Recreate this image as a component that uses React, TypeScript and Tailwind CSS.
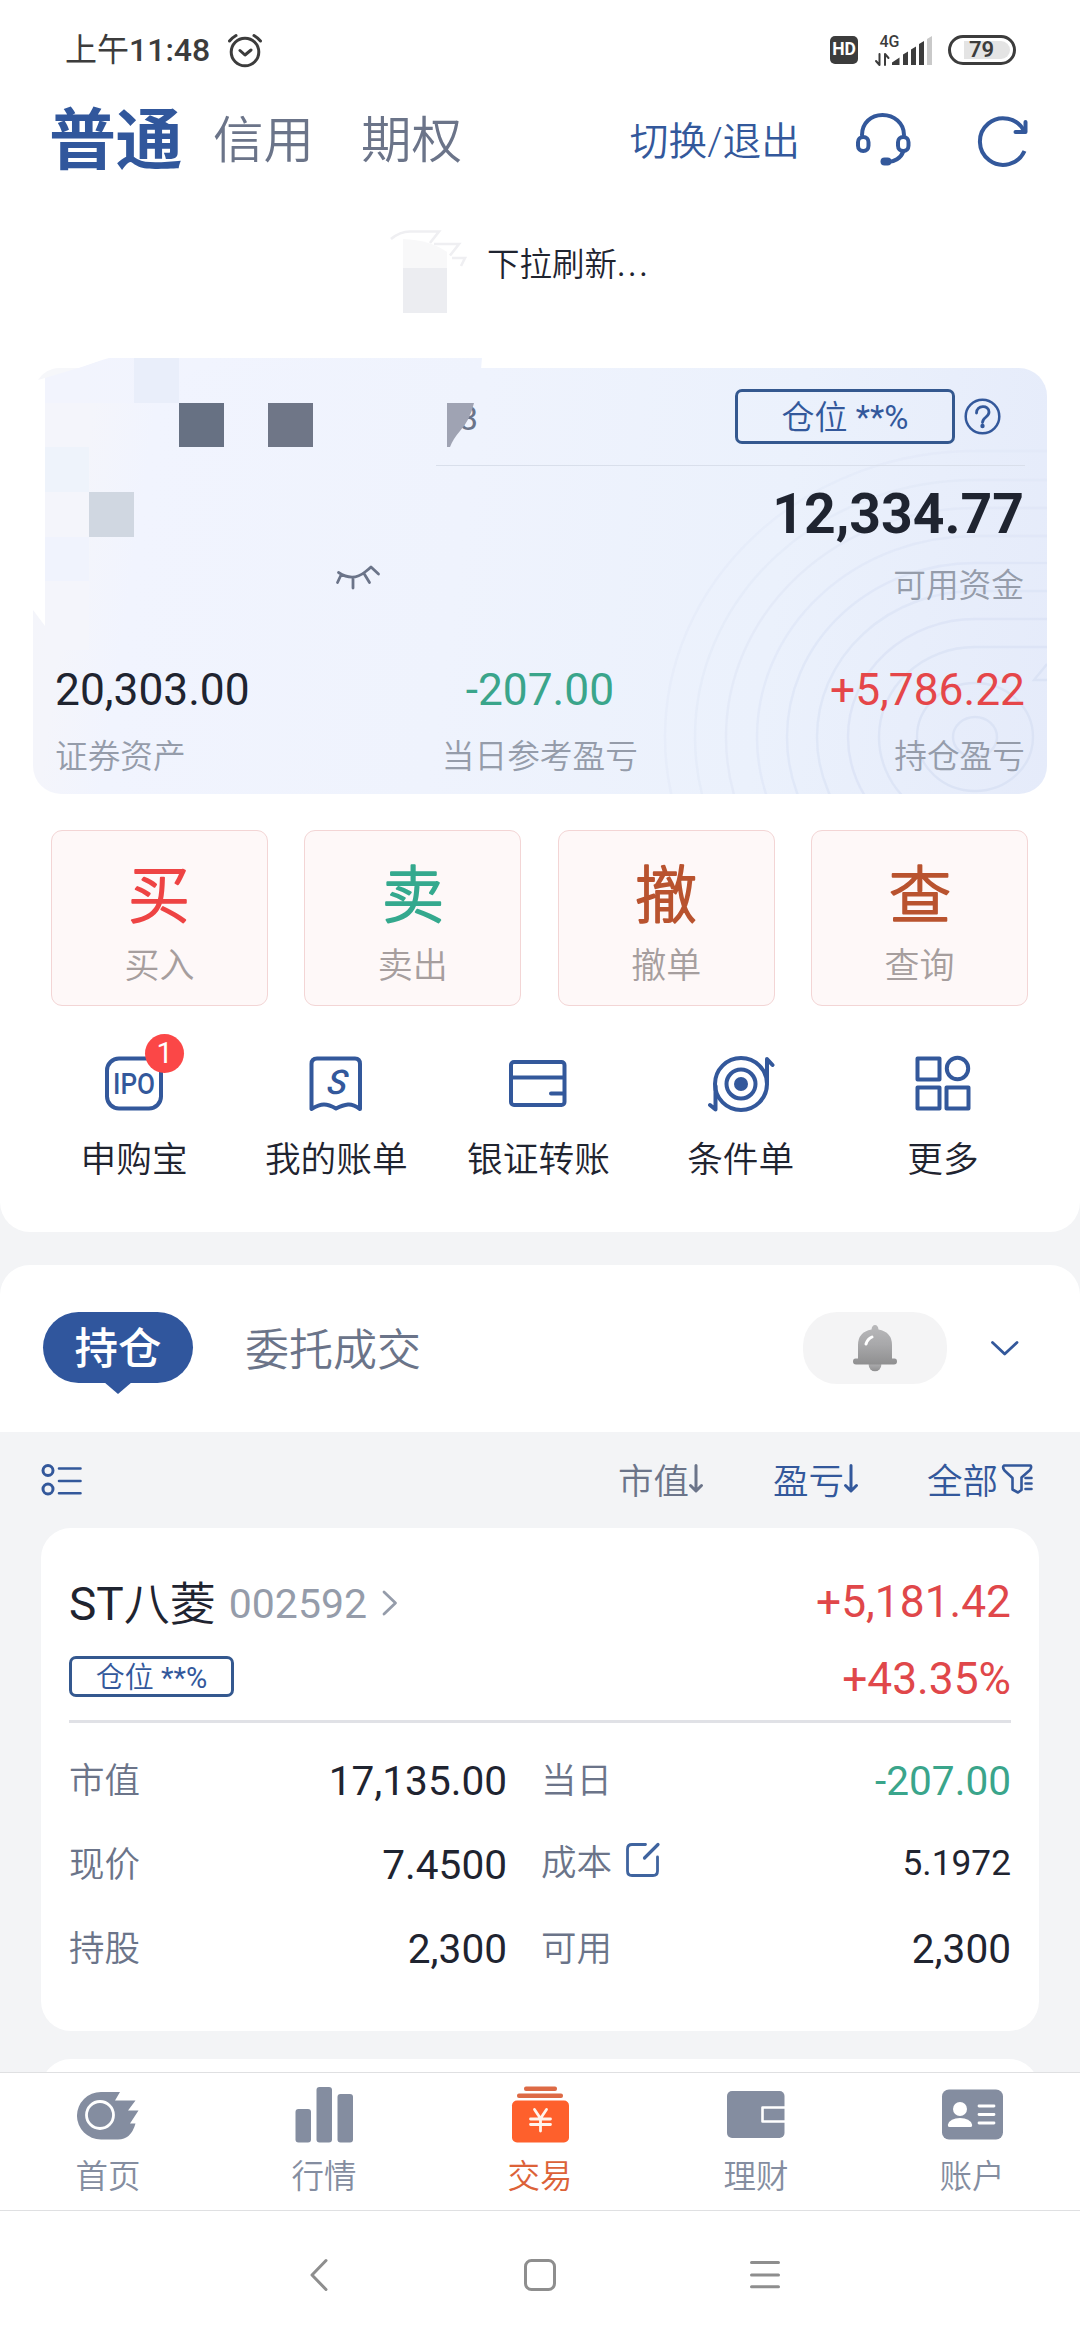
import type { ReactNode } from "react";

const BLUE = "#33589b";

/** Icon whose drawing units are pixels; box is x, y, width, height of its view. */
function Art({ box, className = "", children }: { box: [number, number, number, number]; className?: string; children: ReactNode }) {
  return (
    <svg
      viewBox={box.join(" ")}
      width={box[2]}
      height={box[3]}
      fill="none"
      strokeLinecap="round"
      strokeLinejoin="round"
      className={`block shrink-0 overflow-visible ${className}`}
    >
      {children}
    </svg>
  );
}

function StatusBar() {
  return (
    <div className="flex h-[100px] items-center pr-[64px] pl-[65px] text-[#3c3c3c]">
      <span className="w-[163px] text-[32px] leading-[40px] font-medium whitespace-nowrap">
        <span className="font-normal">上午</span>11:48
      </span>
      <Art box={[228, 33, 34, 34]}>
        <g stroke="#3c3c3c" strokeWidth="3">
          <circle cx="245" cy="52" r="13.8" />
          <path d="M240 50.5l5 4.5 6-5M229.500 41q3-3.500 6.500-5.500M260.500 41q-3-3.500-6.500-5.500" />
        </g>
      </Art>
      <div className="ml-auto flex h-[32px] items-center">
        <div className="flex h-[28px] w-[28px] items-center justify-center rounded-[5px] bg-[#3c3c3c]">
          <span className="text-[17.5px] leading-none font-bold text-white">HD</span>
        </div>
        <Art box={[875, 33, 57, 31]} className="ml-[17px]">
          <text x="879.500" y="44.500" fontSize="16" fontWeight="500" fill="#3c3c3c">4G</text>
          <path d="M879.500 52v11l-3.500-4M885 63v-11l3.500 4" stroke="#3c3c3c" strokeWidth="2" />
          <g fill="#3c3c3c">
            <path d="M892 63v-2.500l7.500-5V63zM903 63V52.500l5-3V63zM911 63V47.500l5-3V63zM919 63V42l5-3V63z" />
            <path d="M927 63V37l5-3V63z" fill="#c9c9c9" />
          </g>
        </Art>
        <div className="ml-[16px] flex h-[30px] w-[68px] items-center rounded-full border-[3px] border-[#3c3c3c] p-[3px]">
          <div className="ml-[10px] flex h-[18px] w-[46px] items-center rounded-r-full bg-[#e4e4e4] pl-[5px]">
            <span className="text-[22px] leading-none font-semibold">79</span>
          </div>
        </div>
      </div>
    </div>
  );
}

function Header() {
  return (
    <div className="flex h-[78px] items-center pr-[51px] pl-[49px] whitespace-nowrap text-[#6b7489]">
      <span className="mt-[4px] text-[67px] leading-[78px] font-bold tracking-[-0.5px] text-[#31579c]">普通</span>
      <span className="mt-[4px] ml-[31px] text-[50.5px] leading-[78px] font-[350]">信用</span>
      <span className="mt-[4px] ml-[47px] text-[50.5px] leading-[78px] font-[350]">期权</span>
      <span className="mt-[6px] ml-auto text-[38.7px] leading-[78px] font-[350] text-[#33589b]">切换/退出</span>
      <Art box={[856, 113, 54, 53]} className="ml-[56px]">
        <g stroke={BLUE} strokeWidth="4">
          <path d="M862 135C862 123 871 115 882.500 115S904 123 904 135M903 152C901 158 894 162 888 162" />
          <rect x="858" y="137" width="10.500" height="14" rx="5.200" />
          <rect x="898" y="137" width="10.500" height="14" rx="5.200" />
          <path d="M884.500 161.500h3" strokeWidth="8" />
        </g>
      </Art>
      <Art box={[978, 116, 51, 50]} className="mt-[3px] ml-[68px]">
        <g stroke={BLUE} strokeWidth="4">
          <path d="M1024.500 151A23.300 23.300 0 1 1 1024 131" strokeLinecap="butt" />
          <path d="M1025.500 122v10h-10" />
        </g>
      </Art>
    </div>
  );
}

function PullHint() {
  return (
    <div className="flex h-[190px] items-start pt-[52px] pl-[390px]">
      <Art box={[390, 230, 76, 84]}>
        <g stroke="#efeff2" strokeWidth="2.600" strokeLinejoin="miter" strokeLinecap="butt">
          <path d="M391 239Q400 231.500 410 231.500H439L430 243" />
          <path d="M434 244H459L450 255.500" />
          <path d="M452 258H465L461 266" />
        </g>
        <path d="M403 239Q430 240 447 252V268H403z" fill="#f8f8f9" />
        <path d="M403 268H447V313H403z" fill="#ecedf1" />
      </Art>
      <span className="mt-[11px] ml-[21px] text-[32.5px] leading-[48px] text-[#1f2430]">
        <span className="font-[350]">下拉刷新</span>
        <span className="tracking-[2.5px]">...</span>
      </span>
    </div>
  );
}

const RINGS = [
  [96, 90],
  [127, 118],
  [158, 146],
  [188, 174],
  [218, 201],
  [249, 229],
  [280, 257],
  [310, 286],
];

function CardRings() {
  return (
    <svg viewBox="33 368 1014 426" className="absolute inset-0 h-full w-full rounded-[28px]" fill="none" stroke="#dbe3f5" strokeWidth="2.400">
      <ellipse cx="975" cy="737" rx="22" ry="20" />
      <ellipse cx="975" cy="737" rx="58" ry="54" />
      {RINGS.map(([rx, ry], i) => (
        <path key={rx} opacity={0.9 - i * 0.09} d={`M1050 ${737 - ry}H975A${rx} ${ry} 0 0 0 ${975 - rx} 737A${rx} ${ry} 0 0 0 975 ${737 + ry}`} />
      ))}
      <path d="M1047 664l-13 16h13" />
    </svg>
  );
}

/** Pixelated patches hiding the account name and total. */
function Mosaic() {
  return (
    <Art box={[33, 358, 449, 290]} className="pointer-events-none absolute top-[-10px] left-0">
      <defs>
        <linearGradient id="overhang" gradientUnits="userSpaceOnUse" x1="78" y1="0" x2="482" y2="0">
          <stop offset="0" stopColor="#f2f4fd" />
          <stop offset="0.300" stopColor="#f1f4fe" />
          <stop offset="1" stopColor="#eff3fd" />
        </linearGradient>
      </defs>
      <path d="M32 357H45V626L33 610z" fill="#fff" />
      <path d="M45 378Q60 370 78 368Q98 361 109 358H482L481 369H200L134 403H45z" fill="url(#overhang)" />
      <path d="M32 357H109Q88 365 78 368H60Q45 368 38 380H32z" fill="#fff" />
      <path d="M38 380Q46 368 60 368H78L45 378z" fill="#f6f7fa" />
      <path d="M134 358h45v45h-45z" fill="#e9eefa" />
      <path d="M45 403h44v44H45z" fill="#f4f5fb" />
      <path d="M45 447h44v45H45z" fill="#eef3fb" />
      <path d="M45 492h44v45H45z" fill="#f4f5fb" />
      <path d="M45 537h44v44H45z" fill="#f0f3fd" />
      <path d="M45 581h44v69H45z" fill="#f4f5fb" />
      <path d="M179 403h45v44h-45z" fill="#677183" />
      <path d="M268 403h45v44h-45z" fill="#6f7687" />
      <path d="M89 492h45v45H89z" fill="#d0d7e1" />
      <text x="459" y="430" fontSize="34" fill="#6b7489">3</text>
      <path d="M447 403H474Q470 420 460 431Q453 439 450 447H447z" fill="#9fa3b3" />
    </Art>
  );
}

function AssetCard() {
  const figures = [
    { value: "20,303.00", label: "证券资产", tone: "text-[#1f2430]", align: "items-start" },
    { value: "-207.00", label: "当日参考盈亏", tone: "text-[#3aa58b]", align: "items-center" },
    { value: "+5,786.22", label: "持仓盈亏", tone: "text-[#e54649]", align: "items-end" },
  ];
  return (
    <div className="relative mx-[33px] h-[426px] rounded-[28px] bg-[linear-gradient(98deg,#f4f5fa_0%,#f4f5fb_6%,#f1f4fe_12%,#eff3fd_42%,#ebf1fc_72%,#e5ebfa_100%)]">
      <CardRings />
      <div className="relative">
        <div className="mr-[22px] ml-[403px] flex h-[98px] items-center justify-end border-b border-[#d9dfeb] pr-[24px]">
          <div className="mb-[1px] flex h-[55px] w-[220px] items-center justify-center rounded-[7px] border-[3px] border-[#34588f] pt-[2px] text-[33px] leading-none text-[#33589b]">
            <span className="font-[350]">仓位</span>&nbsp;**%
          </div>
          <Art box={[966, 399, 36, 36]} className="ml-[10px]">
            <circle cx="983.500" cy="416.500" r="16.800" stroke={BLUE} strokeWidth="2.500" />
            <path d="M977.500 413c0-8 12.500-8.500 12.500-1 0 5.500-6.500 5-6.500 10.500" stroke={BLUE} strokeWidth="2.800" />
            <circle cx="983.500" cy="426" r="2.200" fill={BLUE} />
          </Art>
        </div>
        <div className="flex h-[184px] items-start justify-between pr-[23px]">
          <Art box={[336, 566, 43, 23]} className="mt-[100px] ml-[303px]">
            <path d="M338.500 572.500Q353 582 365 572Q369 569 371 567L378.500 574M341 575L337.500 582.500M353 579V588M364 573.500L369.500 582.500" stroke="#6b7489" strokeWidth="2.800" />
          </Art>
          <div className="flex flex-col items-end">
            <span className="mt-[19px] text-[55.3px] leading-[60px] font-bold text-[#1f2430]">12,334.77</span>
            <span className="mt-[21px] text-[32.7px] leading-[40px] font-[350] text-[#959caa]">可用资金</span>
          </div>
        </div>
        <div className="flex justify-between pr-[22px] pl-[22px]">
          {figures.map((f) => (
            <div key={f.label} className={`flex flex-col ${f.align}`}>
              <span className={`mt-[15px] text-[44.3px] leading-[50px] ${f.tone}`}>{f.value}</span>
              <span className="mt-[22px] text-[32.7px] leading-[40px] font-[350] text-[#959caa]">{f.label}</span>
            </div>
          ))}
        </div>
      </div>
      <Mosaic />
    </div>
  );
}

function TradeButtons() {
  const items = [
    ["买", "买入", "#ee4444"],
    ["卖", "卖出", "#35a98e"],
    ["撤", "撤单", "#b9532f"],
    ["查", "查询", "#b9532f"],
  ];
  return (
    <div className="mt-[36px] grid grid-cols-4 gap-[36.5px] pr-[52px] pl-[51px]">
      {items.map(([glyph, label, color]) => (
        <button key={label} className="flex h-[176px] flex-col items-center rounded-[11px] border-[1.5px] border-[#f3d5d5] bg-[#fef8f8]">
          <Art box={[0, 0, 64, 70]} className="mt-[31px]">
            <text x="32" y="55.500" textAnchor="middle" fontSize="62" fontWeight="300" fill={color} stroke={color} strokeWidth="2">
              {glyph}
            </text>
          </Art>
          <span className="mt-[13px] text-[35px] leading-[44px] font-[350] text-[#a69e9e]">{label}</span>
        </button>
      ))}
    </div>
  );
}

function QuickLinks() {
  const items: { label: string; icon: ReactNode }[] = [
    {
      label: "申购宝",
      icon: (
        <div className="relative">
          <Art box={[104, 1056, 58, 56]}>
            <rect x="106" y="1058.500" width="54" height="50" rx="12" stroke={BLUE} strokeWidth="4" />
            <text x="133" y="1094" textAnchor="middle" fontSize="29" fontWeight="500" fill={BLUE} textLength="42" lengthAdjust="spacingAndGlyphs">
              IPO
            </text>
          </Art>
          <div className="absolute top-[-22px] left-[40px] flex h-[39px] w-[39px] items-center justify-center rounded-full bg-[#fb4747] text-[29px] leading-none text-white">1</div>
        </div>
      ),
    },
    {
      label: "我的账单",
      icon: (
        <Art box={[308, 1056, 56, 56]}>
          <path d="M311.500 1109V1064q0-5.500 5.500-5.500H355q5 0 5 5.500V1109Q353 1104 348 1104.500T336 1108.500Q329 1104.500 324 1104.500T311.500 1109z" stroke={BLUE} strokeWidth="4" />
          <text transform="translate(336 1094) skewX(-8)" textAnchor="middle" fontSize="34" fontWeight="500" fontStyle="italic" fill={BLUE}>
            S
          </text>
        </Art>
      ),
    },
    {
      label: "银证转账",
      icon: (
        <Art box={[509, 1056, 58, 56]}>
          <rect x="511" y="1062" width="53.500" height="43" rx="3" stroke={BLUE} strokeWidth="4" />
          <path d="M511 1077.500h53M551 1093.500h13" stroke={BLUE} strokeWidth="4" />
        </Art>
      ),
    },
    {
      label: "条件单",
      icon: (
        <Art box={[707, 1056, 66, 56]}>
          <g stroke={BLUE} strokeWidth="4">
            <circle cx="740" cy="1084" r="26" />
            <circle cx="740" cy="1084" r="14.500" />
            <path d="M766 1082V1059l5.500 6M714.500 1086V1109.500l-5.500-4.500" />
          </g>
          <circle cx="740" cy="1084" r="7" fill={BLUE} />
        </Art>
      ),
    },
    {
      label: "更多",
      icon: (
        <Art box={[913, 1056, 56, 56]}>
          <g stroke={BLUE} strokeWidth="4">
            <rect x="915.500" y="1058.500" width="22" height="21" />
            <rect x="915.500" y="1087.500" width="22" height="21" />
            <rect x="944.500" y="1087.500" width="22" height="21" />
            <circle cx="955.500" cy="1068.500" r="10.700" />
          </g>
        </Art>
      ),
    },
  ];
  return (
    <div className="mt-[50px] grid grid-cols-5 pr-[36px] pl-[33px]">
      {items.map((it) => (
        <div key={it.label} className="flex flex-col items-center">
          {it.icon}
          <span className="mt-[26px] text-[35.7px] leading-[44px] font-[350] text-[#1f2430]">{it.label}</span>
        </div>
      ))}
    </div>
  );
}

function HoldingTabs() {
  return (
    <div className="mt-[33px] flex h-[167px] shrink-0 items-start rounded-t-[30px] bg-white pt-[47px] pr-[62px] pl-[43px]">
      <div className="relative flex h-[71px] w-[150px] items-center justify-center rounded-[36px] bg-[#30569d]">
        <span className="mt-[5px] text-[43.5px] leading-none font-medium text-white">持仓</span>
        <div className="absolute top-[70px] left-[61px] h-[12px] w-[28px] bg-[#30569d] [clip-path:polygon(0_0,100%_0,50%_100%)]" />
      </div>
      <span className="mt-[3px] ml-[52px] text-[44px] leading-[72px] font-[350] text-[#6b7489]">委托成交</span>
      <div className="ml-auto flex h-[72px] w-[144px] items-center justify-center rounded-[34px] bg-[#f4f4f5]">
        <Art box={[853, 1325, 44, 46]}>
          <defs>
            <linearGradient id="bell" x1="0" y1="0" x2="0" y2="1">
              <stop offset="0" stopColor="#b9b9bb" />
              <stop offset="0.500" stopColor="#a8a8aa" />
              <stop offset="1" stopColor="#8f8f90" />
            </linearGradient>
          </defs>
          <g fill="url(#bell)">
            <circle cx="875" cy="1365" r="6.300" />
            <path d="M875 1325q3 0 3.500 4.500Q892 1332 892 1345V1358.500h2.500q2.500 0 2.500 3t-3 3H856q-3 0-3-3t2.500-3H858V1345Q858 1332 871.500 1329.500Q872 1325 875 1325z" />
          </g>
          <path d="M866 1344Q867.500 1339 872 1337" stroke="#fff" strokeWidth="3" />
        </Art>
      </div>
      <Art box={[991, 1341, 27, 15]} className="mt-[29px] ml-[44px]">
        <path d="M992.500 1342.500L1004.700 1354L1017 1342.500" stroke={BLUE} strokeWidth="2.800" />
      </Art>
    </div>
  );
}

function SortArrow({ color }: { color: string }) {
  return (
    <Art box={[688, 1465, 14, 29]} className="mb-[3px]">
      <path d="M695 1466.500V1491.500M689.500 1486.500l5.500 5.500 5.500-5.500" stroke={color} strokeWidth="3" />
    </Art>
  );
}

function FilterBar() {
  return (
    <div className="flex h-[96px] shrink-0 items-center pr-[47px] pl-[41px] text-[35.5px] leading-[44px] font-[350] text-[#33589b]">
      <Art box={[41, 1464, 41, 33]}>
        <g stroke={BLUE} strokeWidth="3">
          <circle cx="48" cy="1470.500" r="5" />
          <circle cx="48" cy="1489" r="5" />
          <path d="M59 1468.500h21.500M59 1481h21.500M59 1493.300h21.500" strokeWidth="2.600" />
        </g>
      </Art>
      <div className="ml-auto flex items-center text-[#6b7489]">
        <span className="mt-[4px]">市值</span>
        <SortArrow color="#6b7489" />
      </div>
      <div className="ml-[70px] flex items-center">
        <span className="mt-[4px]">盈亏</span>
        <SortArrow color={BLUE} />
      </div>
      <div className="ml-[69px] flex items-center">
        <span className="mt-[4px]">全部</span>
        <Art box={[1002, 1464, 31, 30]} className="mb-[3px] ml-[4px]">
          <g stroke={BLUE} strokeWidth="2.600">
            <path d="M1004 1465.500H1030.500Q1032 1467 1030 1470L1021.500 1477.500V1490L1018 1492.500L1012.500 1489.500V1478L1004.500 1470.500Q1002 1467 1004 1465.500z" />
            <path d="M1025.500 1478h6M1025.500 1483.500h6M1025.500 1489h6" />
          </g>
        </Art>
      </div>
    </div>
  );
}

function Cell({ label, value, tone = "text-[#1f2430]", small = false, children }: { label: string; value: string; tone?: string; small?: boolean; children?: ReactNode }) {
  return (
    <div className={`flex items-center ${small ? "-mt-[4px]" : ""}`}>
      <span className="text-[35.5px] leading-[44px] font-[350] text-[#6b7489]">{label}</span>
      {children}
      <span className={`ml-auto ${small ? "text-[35.3px]" : "text-[40.6px]"} leading-[44px] ${tone}`}>{value}</span>
    </div>
  );
}

function HoldingCard() {
  return (
    <div className="mx-[41px] flex h-[503px] shrink-0 flex-col rounded-[30px] bg-white px-[28px]">
      <div className="flex h-[195px] justify-between border-b-[3px] border-[#e0e1e6]">
        <div className="flex flex-col items-start">
          <div className="mt-[48px] flex items-center">
            <span className="text-[46px] leading-[56px] text-[#1f2430]">
              ST<span className="font-[350]">八菱</span>
            </span>
            <span className="ml-[13px] text-[41px] leading-[56px] text-[#959caa]">002592</span>
            <Art box={[381, 1588, 15, 26]} className="mb-[3px] ml-[15px]">
              <path d="M383 1590L394.500 1601L383 1612" stroke="#959caa" strokeWidth="2.800" />
            </Art>
          </div>
          <div className="mt-[24px] flex h-[41px] w-[165px] items-center justify-center rounded-[7px] border-[3px] border-[#34588f] pt-[3px] text-[29px] leading-none text-[#33589b]">
            <span className="font-[350]">仓位</span>&nbsp;**%
          </div>
        </div>
        <div className="flex flex-col items-end text-[44.3px] leading-[50px] text-[#e0474a]">
          <span className="mt-[49px]">+5,181.42</span>
          <span className="mt-[27px]">+43.35%</span>
        </div>
      </div>
      <div className="mt-[36px] grid grid-cols-[438px_470px] gap-x-[34px] gap-y-[40px]">
        <Cell label="市值" value="17,135.00" />
        <Cell label="当日" value="-207.00" tone="text-[#3aa58b]" />
        <Cell label="现价" value="7.4500" />
        <Cell label="成本" value="5.1972" small>
          <Art box={[626, 1843, 34, 34]} className="mb-[7px] ml-[14px]">
            <path d="M645.500 1844.500H632q-4.500 0-4.500 4.500V1871q0 4.500 4.500 4.500H653q4.500 0 4.500-4.500V1857" stroke="#3f649f" strokeWidth="2.800" />
            <path d="M644.500 1858L658 1844.500" stroke="#3f649f" strokeWidth="3.200" />
          </Art>
        </Cell>
        <Cell label="持股" value="2,300" />
        <Cell label="可用" value="2,300" />
      </div>
    </div>
  );
}

function BottomNav() {
  const G = "#848da0";
  const items: { label: string; icon: ReactNode; active?: boolean }[] = [
    {
      label: "首页",
      icon: (
        <Art box={[77, 2087, 62, 56]}>
          <path d="M101 2092H120L115 2100.500H135.500L128 2110.500H138.500L130 2123.500H135.500Q131 2139.500 118 2139.500H101A24 23.700 0 0 1 101 2092z" fill={G} />
          <circle cx="100" cy="2115" r="13.500" stroke="#fff" strokeWidth="2.800" />
        </Art>
      ),
    },
    {
      label: "行情",
      icon: (
        <Art box={[295, 2087, 58, 56]}>
          <g fill={G}>
            <rect x="295.500" y="2109" width="15.500" height="33.500" rx="3" />
            <rect x="316.500" y="2087" width="15.500" height="55.500" rx="3" />
            <rect x="337.500" y="2094" width="15.500" height="48.500" rx="3" />
          </g>
        </Art>
      ),
    },
    {
      label: "交易",
      active: true,
      icon: (
        <Art box={[511, 2087, 58, 56]}>
          <g fill="#fe602c">
            <rect x="524" y="2086.500" width="33" height="4.500" rx="2" fill="#dd6a45" />
            <rect x="517" y="2093.500" width="46" height="4.500" rx="2" fill="#dd6a45" />
            <rect x="512" y="2100.500" width="57" height="42" rx="5" />
          </g>
          <path d="M534.500 2109.500l6 9 6-9M530.500 2119h20M530.500 2124.500h20M540.500 2119v12" stroke="#fff4ec" strokeWidth="2.800" />
        </Art>
      ),
    },
    {
      label: "理财",
      icon: (
        <Art box={[726, 2087, 58, 56]}>
          <rect x="726" y="2091" width="57.500" height="47" rx="5" fill={G} />
          <path d="M784 2107.500H761.500V2121.500H784" stroke="#fff" strokeWidth="2.600" strokeLinecap="butt" />
        </Art>
      ),
    },
    {
      label: "账户",
      icon: (
        <Art box={[941, 2087, 61, 56]}>
          <rect x="941" y="2089.500" width="61" height="50" rx="7" fill={G} />
          <circle cx="959" cy="2109" r="7" fill="#fff" />
          <path d="M948.500 2127q-2 0-1.500-2.500Q949 2118 959 2118T971 2124.500q.5 2.500-1.500 2.500z" fill="#fff" />
          <path d="M978 2106h15M978 2114.500h15M978 2123h15" stroke="#fff" strokeWidth="2.800" />
        </Art>
      ),
    },
  ];
  return (
    <div className="grid h-[139px] shrink-0 grid-cols-5 border-y border-[#dfe0e2] bg-white">
      {items.map((it) => (
        <div key={it.label} className="flex flex-col items-center pt-[14px]">
          {it.icon}
          <span className={`mt-[14px] text-[32.5px] leading-[40px] font-[350] ${it.active ? "text-[#dc6238]" : "text-[#848da0]"}`}>{it.label}</span>
        </div>
      ))}
    </div>
  );
}

function SystemKeys() {
  return (
    <div className="flex flex-1 items-start bg-white pt-[48px] pl-[310px]">
      <Art box={[310, 2259, 18, 32]}>
        <path d="M326 2260.500L312 2275L326 2289.500" stroke="#8e8e8e" strokeWidth="3" />
      </Art>
      <Art box={[524, 2259, 32, 32]} className="ml-[196px]">
        <rect x="525.500" y="2260.500" width="29" height="29" rx="6" stroke="#8e8e8e" strokeWidth="3" />
      </Art>
      <Art box={[750, 2259, 30, 32]} className="ml-[194px]">
        <path d="M751.500 2262.500h27M751.500 2275h27M751.500 2286.700h27" stroke="#8e8e8e" strokeWidth="3" />
      </Art>
    </div>
  );
}

export default function App() {
  return (
    <div className="flex h-[2340px] w-[1080px] flex-col overflow-hidden bg-[#f3f4f6] font-[Roboto,'Noto_Sans_CJK_SC',sans-serif]">
      <section className="h-[1232px] shrink-0 rounded-b-[30px] bg-white">
        <StatusBar />
        <Header />
        <PullHint />
        <AssetCard />
        <TradeButtons />
        <QuickLinks />
      </section>
      <HoldingTabs />
      <FilterBar />
      <HoldingCard />
      <div className="mx-[41px] mt-[28px] h-[13px] shrink-0 overflow-hidden">
        <div className="h-[60px] rounded-t-[30px] bg-white" />
      </div>
      <BottomNav />
      <SystemKeys />
    </div>
  );
}
